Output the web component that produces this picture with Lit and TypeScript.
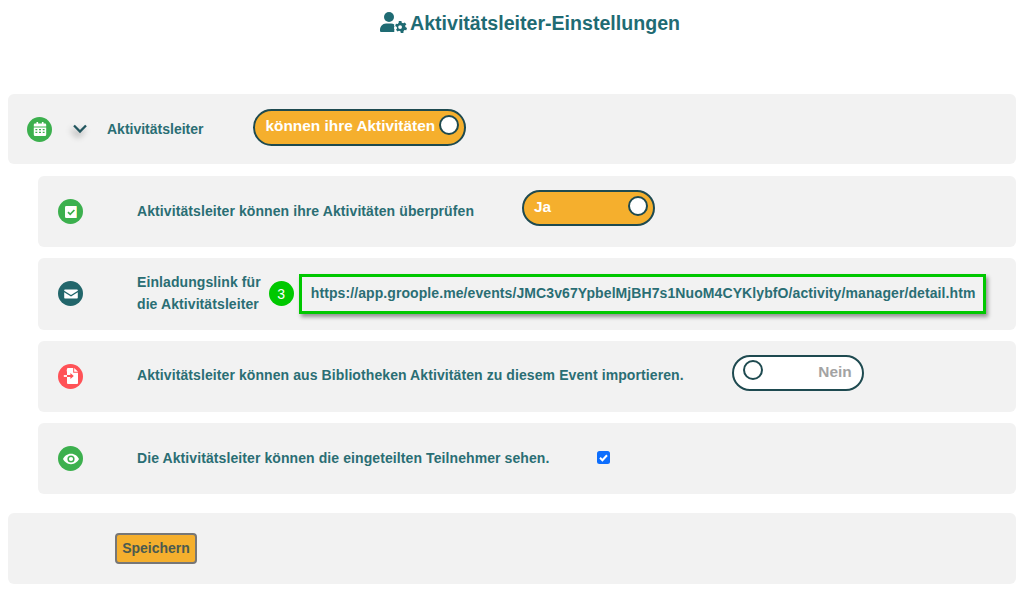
import { LitElement, html, css, svg } from "lit";
import { customElement } from "lit/decorators.js";

const calendar = svg`<path fill="#fff" d="M5.500 2h1.600v1.600h3.800V2h1.600v1.600H14a1.200 1.200 0 0 1 1.200 1.200V6.600H2.800V4.800A1.200 1.200 0 0 1 4 3.600h1.500z"/><path fill="#fff" fill-rule="evenodd" d="M2.800 7.500h12.400v7.300a1.200 1.200 0 0 1-1.200 1.200H4a1.200 1.200 0 0 1-1.200-1.200zM4.400 8.900v1.300h1.900V8.900zm3.600 0v1.300h2V8.900zm3.700 0v1.300h1.900V8.900zM4.400 11.700V13h1.900v-1.300zm3.600 0V13h2v-1.300zm3.700 0V13h1.900v-1.300z"/>`;
const check = svg`<rect x="3" y="3" width="12" height="12" rx="1.200" fill="#fff"/><path d="M6 9.200l2.200 2.200L12.400 7" fill="none" stroke="#3cb04e" stroke-width="1.700"/><path d="M14.200 3.500h.8v11h-.8z" fill="#f5e66a"/>`;
const mail = svg`<path fill="#fff" d="M3.200 4.400h11.600c.6 0 1 .4 1 1v.4L9 10 2.200 5.800v-.4c0-.6.4-1 1-1z"/><path fill="#fff" d="M2.200 7.200 9 11.400l6.800-4.200v5.400c0 .6-.4 1-1 1H3.200c-.6 0-1-.4-1-1z"/>`;
const importIcon = svg`<path fill="#fff" d="M6 1h5.200v4.800H16V16a1 1 0 0 1-1 1H6a1 1 0 0 1-1-1V5a4 4 0 0 1 0-3 1 1 0 0 1 1-1z"/><path fill="#fff" d="M12.200 1 16 4.800h-3.800z"/><path fill="#fff" d="M1.800 8.100H5v1.800H1.800z"/><path fill="#ff5257" d="M5 8.100h3.400V6l3.400 3-3.400 3V9.900H5z"/>`;
const eye = svg`<path fill="#fff" fill-rule="evenodd" d="M9 3.800c3.800 0 6.600 2.500 8 5.200-1.400 2.700-4.200 5.200-8 5.200S2.400 11.700 1 9c1.400-2.700 4.200-5.200 8-5.200zm0 1.600a3.600 3.600 0 1 0 0 7.200 3.600 3.600 0 0 0 0-7.200z"/><circle cx="9" cy="9" r="2.100" fill="#fff"/>`;

@customElement("app-root")
export class AppRoot extends LitElement {
  static styles = css`
    :host { display: block; width: 1024px; height: 590px; overflow: hidden; background: #fff;
      font-family: "Liberation Sans", Arial, sans-serif; color: #2a6e74; }
    * { box-sizing: border-box; }
    h1 { margin: 0; height: 94px; padding: 10px 0 0 36px; display: flex; justify-content: center; align-items: flex-start;
      gap: 3px; font-size: 19.6px; line-height: 26px; font-weight: 700; color: #1f6b73; }
    h1 svg { margin-top: 2px; }
    .panel { background: #f2f2f2; border-radius: 6px; display: flex; align-items: center; height: 71.33px; }
    .main { margin: 0 8px; height: 70px; padding-left: 19px; }
    .rows { display: flex; flex-direction: column; gap: 11px; margin: 12px 8px 0 38px; }
    .rows .panel { padding-left: 20px; }
    .foot { margin: 19px 8px 0; padding-left: 107px; height: 71px; }
    .ic { width: 25px; height: 25px; border-radius: 50%; flex: none; display: flex; align-items: center; justify-content: center; }
    .green { background: #3cb04e; }
    .teal { background: #22666b; }
    .red { background: #ff5257; }
    .chev { margin-left: 19px; width: 18px; height: 12px; flex: none; filter: drop-shadow(-2px 4px 3px rgba(0,0,0,.4)); }
    .lab { font-size: 14px; font-weight: 700; line-height: 22px; letter-spacing: .09px; }
    .lab.m { margin-left: 18px; letter-spacing: 0; }
    .rows .lab { margin-left: 54px; margin-bottom: 2px; }
    .sw { display: flex; align-items: center; justify-content: space-between; height: 36px; border: 2px solid #1e4a50; border-radius: 19px;
      flex: none; font-size: 15.4px; font-weight: 700; margin-left: 48px; }
    .sw span:not(.knob) { margin-bottom: 3px; }
    .sw.off span:not(.knob) { margin-bottom: 1px; }
    .on { background: #f5af2d; color: #fff; }
    .off { background: #fff; color: #a3a3a3; }
    .knob { width: 20px; height: 20px; border-radius: 50%; border: 2px solid #1e4a50; background: #fff; flex: none; margin-bottom: 5px; }
    .s1 { margin-left: 50px; width: 213px; height: 37px; padding: 0 5px 0 10px; margin-top: -3px; }
    .s2 { width: 133px; padding: 0 5px 0 10px; margin-top: -7px; }
    .s3 { width: 132px; padding: 0 10px 0 9px; margin-top: -7px; }
    .num { width: 25px; height: 25px; border-radius: 50%; background: #00c800; color: #fff; font-size: 14px; flex: none;
      display: flex; align-items: center; justify-content: center; margin-left: 8px; }
    .url { margin-left: 5px; width: 687px; height: 40px; border: 3px solid #00c800; flex: none; font-size: 14px; font-weight: 700;
      display: flex; align-items: center; padding: 0 0 2px 9px; white-space: nowrap; letter-spacing: .09px;
      box-shadow: 2px 3px 4px rgba(0,0,0,.4); background: #f2f2f2; }
    .cbw { margin-left: 48px; width: 13px; height: 13px; border-radius: 2.5px; background: #0d6efd; flex: none; display: flex; position: relative; top: -1px; }
    button { width: 82px; height: 31px; margin: 0; padding: 0 0 2px; background: #f5af2d; border: 2px solid #777; border-radius: 4px;
      font: 700 14px "Liberation Sans", Arial, sans-serif; color: #4b5a50; }
  `;

  render() {
    const icon = (cls: string, p: unknown) => html`<span class="ic ${cls}"><svg width="18" height="18" viewBox="0 0 18 18">${p}</svg></span>`;
    return html`
      <h1>
        <svg width="27" height="22" viewBox="0 0 27 22" fill="#1f6b73">
          <circle cx="9" cy="5" r="5"/>
          <path d="M0 18C0 14.500 2.500 11.500 6 11.500h5c1.300 0 2.400.3 3.300.9-.4.900-.2 1.600.2 2.200-.7.900-.7 2.100 0 3-.3.700-.4 1.400-.1 2.400H1.500A1.500 1.500 0 0 1 0 18z"/>
          <path fill-rule="evenodd" d="M18.800 9h2.600l.4 1.700 1.400.6 1.500-.9 1.700 1.900-1.200 1.300.2 1.400 1.600.9-.7 2.300-1.800-.1-1 1.100-.1 1.700h-2.600l-.4-1.600-1.400-.6-1.500.8-1.500-1.800 1-1.300-.2-1.400-1.600-.9.700-2.300 1.800.1 1-1.100zm1.300 4.200a1.900 1.900 0 1 0 0 3.800 1.900 1.900 0 0 0 0-3.800z"/>
        </svg>
        Aktivitätsleiter-Einstellungen
      </h1>
      <div class="panel main">
        ${icon("green", calendar)}
        <svg class="chev" viewBox="0 0 18 12"><path d="M3 2.500l6 6 6-6" fill="none" stroke="#22565f" stroke-width="2.300"/></svg>
        <span class="lab m">Aktivitätsleiter</span>
        <div class="sw on s1"><span>können ihre Aktivitäten</span><span class="knob"></span></div>
      </div>
      <div class="rows">
        <div class="panel">
          ${icon("green", check)}
          <span class="lab">Aktivitätsleiter können ihre Aktivitäten überprüfen</span>
          <div class="sw on s2"><span>Ja</span><span class="knob"></span></div>
        </div>
        <div class="panel">
          ${icon("teal", mail)}
          <span class="lab">Einladungslink für<br />die Aktivitätsleiter</span>
          <span class="num">3</span>
          <div class="url">https://app.groople.me/events/JMC3v67YpbelMjBH7s1NuoM4CYKlybfO/activity/manager/detail.htm</div>
        </div>
        <div class="panel">
          ${icon("red", importIcon)}
          <span class="lab">Aktivitätsleiter können aus Bibliotheken Aktivitäten zu diesem Event importieren.</span>
          <div class="sw off s3"><span class="knob"></span><span>Nein</span></div>
        </div>
        <div class="panel">
          ${icon("green", eye)}
          <span class="lab">Die Aktivitätsleiter können die eingeteilten Teilnehmer sehen.</span>
          <span class="cbw"><svg width="13" height="13" viewBox="0 0 13 13"><path d="M3 6.800l2.400 2.400L10 4.200" fill="none" stroke="#fff" stroke-width="2"/></svg></span>
        </div>
      </div>
      <div class="panel foot"><button>Speichern</button></div>
    `;
  }
}
